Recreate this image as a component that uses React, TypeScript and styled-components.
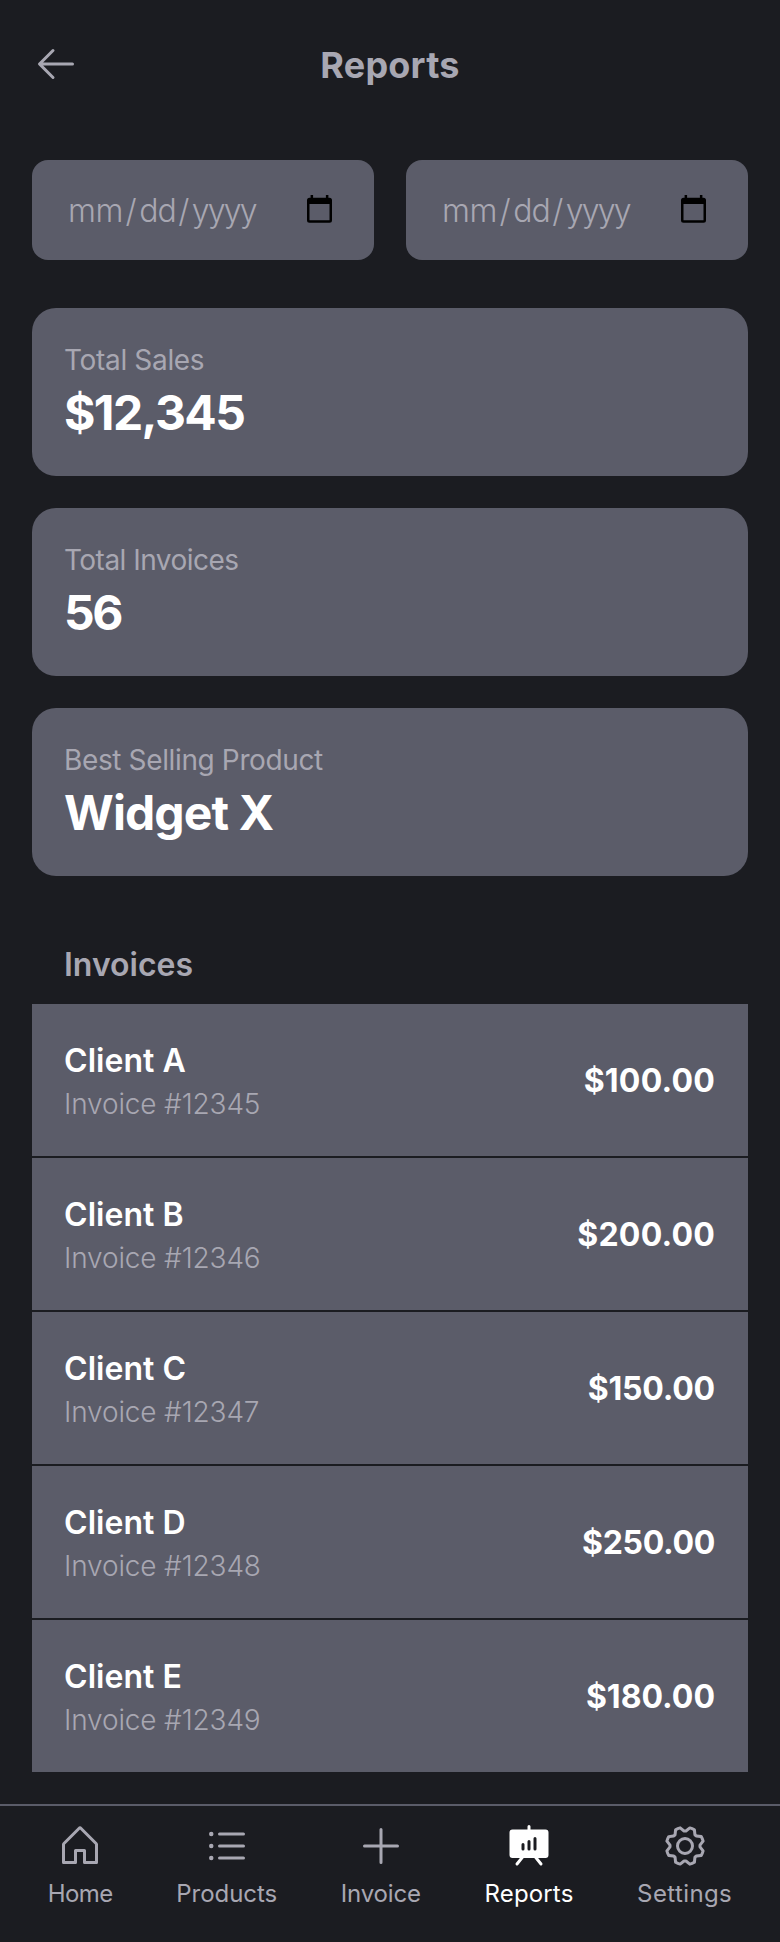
import React from "react";
import styled, { createGlobalStyle } from "styled-components";
import {
  PiArrowLeft,
  PiGear,
  PiHouse,
  PiListBullets,
  PiPlus,
  PiPresentationChartFill,
} from "react-icons/pi";

const color = {
  page: "#1b1c21",
  panel: "#5b5c69",
  muted: "#a8a7b2",
  bright: "#ffffff",
};

const GlobalStyle = createGlobalStyle`
  * { box-sizing: border-box; }
  body {
    margin: 0;
    background: ${color.page};
    font-family: Inter, "Liberation Sans", sans-serif;
  }
`;

const Screen = styled.div`
  width: 780px;
  height: 1942px;
  display: flex;
  flex-direction: column;
  background: ${color.page};
  color: ${color.muted};
`;

const Header = styled.header`
  height: 128px;
  padding: 0 32px;
  display: grid;
  grid-template-columns: 48px 1fr 48px;
  align-items: center;
  svg { display: block; }
`;

const Title = styled.h1`
  margin: 0;
  padding-top: 2px;
  text-align: center;
  font-size: 36px;
  line-height: 44px;
  font-weight: 700;
  letter-spacing: 0.2px;
`;

const Main = styled.main`
  flex: 1;
  padding: 32px 32px 0;
`;

const DateRow = styled.div`
  display: grid;
  grid-template-columns: 1fr 1fr;
  gap: 32px;
`;

const DateField = styled.button`
  height: 100px;
  padding: 0 42px 0 36px;
  border: 0;
  border-radius: 16px;
  display: flex;
  align-items: center;
  justify-content: space-between;
  background: ${color.panel};
  color: ${color.muted};
  font: 300 32px/40px Inter, "Liberation Sans", sans-serif;
  svg { margin-bottom: 2px; }
`;

const DateHint = styled.span`
  padding-top: 2px;
`;

const DatePart = styled.span<{ $track: number }>`
  letter-spacing: ${(p) => p.$track}px;
`;

const Slash = styled.span`
  margin: 0 2.5px;
`;

const Stats = styled.section`
  margin-top: 48px;
  display: grid;
  gap: 32px;
`;

const StatCard = styled.article`
  height: 168px;
  padding: 30px 32px;
  border-radius: 24px;
  background: ${color.panel};
`;

const StatLabel = styled.p<{ $track: number }>`
  margin: 0;
  font-size: 28px;
  line-height: 44px;
  letter-spacing: ${(p) => p.$track}px;
`;

const StatValue = styled.p<{ $track: number }>`
  margin: 1px 0 0;
  color: ${color.bright};
  font-size: 48px;
  line-height: 60px;
  font-weight: 700;
  letter-spacing: ${(p) => p.$track}px;
`;

const SectionTitle = styled.h2`
  margin: 65px 0 15px;
  padding: 0 32px;
  font-size: 32px;
  line-height: 48px;
  font-weight: 600;
`;

const InvoiceList = styled.ul`
  margin: 0;
  padding: 0;
  list-style: none;
  display: grid;
  gap: 2px;
`;

const InvoiceRow = styled.li`
  height: 152px;
  padding: 2px 33px 0 32px;
  display: flex;
  align-items: center;
  justify-content: space-between;
  background: ${color.panel};
`;

const Client = styled.p`
  margin: 2px 0 0;
  color: ${color.bright};
  font-size: 32px;
  line-height: 44px;
  font-weight: 600;
  letter-spacing: 0.05px;
`;

const InvoiceNumber = styled.p`
  margin: 0;
  font-size: 28px;
  line-height: 43px;
  font-weight: 300;
  letter-spacing: -0.15px;
`;

const Amount = styled.span<{ $track: number }>`
  color: ${color.bright};
  font-size: 32px;
  line-height: 48px;
  font-weight: 700;
  letter-spacing: ${(p) => p.$track}px;
`;

const Nav = styled.nav`
  height: 138px;
  padding: 16px 16px 0;
  border-top: 2px solid ${color.panel};
  display: flex;
  justify-content: space-around;
  align-items: flex-start;
`;

const NavItem = styled.a<{ $active?: boolean; $track: number }>`
  display: flex;
  flex-direction: column;
  align-items: center;
  gap: 9px;
  color: ${(p) => (p.$active ? color.bright : color.muted)};
  font-size: 24px;
  line-height: 30px;
  letter-spacing: ${(p) => p.$track}px;
  svg { display: block; }
`;

const CalendarIcon = () => (
  <svg width="25" height="28" viewBox="0 0 25 28">
    <path
      fillRule="evenodd"
      d="M3.600 0h2.500v2.700h12.800V0h2.500v2.700H22.500A2.500 2.500 0 0 1 25 5.200V25.300a2.500 2.500 0 0 1-2.500 2.500h-20A2.500 2.500 0 0 1 0 25.300V5.200A2.500 2.500 0 0 1 2.500 2.700H3.600zM2.500 9v16.300h20V9z"
    />
  </svg>
);

const stats = [
  { label: "Total Sales", value: "$12,345", lt: -0.33, vt: -1.6 },
  { label: "Total Invoices", value: "56", lt: -0.53, vt: -2.5 },
  { label: "Best Selling Product", value: "Widget X", lt: -0.37, vt: -0.9 },
];

const invoices = [
  { client: "Client A", number: "12345", amount: "$100.00", track: 0.2 },
  { client: "Client B", number: "12346", amount: "$200.00", track: 0.2 },
  { client: "Client C", number: "12347", amount: "$150.00", track: -0.2 },
  { client: "Client D", number: "12348", amount: "$250.00", track: -0.3 },
  { client: "Client E", number: "12349", amount: "$180.00", track: 0 },
];

const tabs = [
  { label: "Home", Icon: PiHouse, track: -0.6 },
  { label: "Products", Icon: PiListBullets, track: -0.05 },
  { label: "Invoice", Icon: PiPlus, track: -0.15 },
  { label: "Reports", Icon: PiPresentationChartFill, track: 0.15, active: true },
  { label: "Settings", Icon: PiGear, track: 0.4 },
];

export default function App() {
  return (
    <>
      <GlobalStyle />
      <Screen>
        <Header>
          <PiArrowLeft size={48} />
          <Title>Reports</Title>
        </Header>
        <Main>
          <DateRow>
            {["from", "to"].map((id) => (
              <DateField key={id}>
                <DateHint>
                  <DatePart $track={-0.4}>mm</DatePart>
                  <Slash>/</Slash>
                  <DatePart $track={-1}>dd</DatePart>
                  <Slash>/</Slash>
                  <DatePart $track={-1.8}>yyyy</DatePart>
                </DateHint>
                <CalendarIcon />
              </DateField>
            ))}
          </DateRow>
          <Stats>
            {stats.map((s) => (
              <StatCard key={s.label}>
                <StatLabel $track={s.lt}>{s.label}</StatLabel>
                <StatValue $track={s.vt}>{s.value}</StatValue>
              </StatCard>
            ))}
          </Stats>
          <SectionTitle>Invoices</SectionTitle>
          <InvoiceList>
            {invoices.map((i) => (
              <InvoiceRow key={i.number}>
                <div>
                  <Client>{i.client}</Client>
                  <InvoiceNumber>Invoice #{i.number}</InvoiceNumber>
                </div>
                <Amount $track={i.track}>{i.amount}</Amount>
              </InvoiceRow>
            ))}
          </InvoiceList>
        </Main>
        <Nav>
          {tabs.map(({ label, Icon, track, active }) => (
            <NavItem key={label} $active={active} $track={track}>
              <Icon size={48} />
              {label}
            </NavItem>
          ))}
        </Nav>
      </Screen>
    </>
  );
}
